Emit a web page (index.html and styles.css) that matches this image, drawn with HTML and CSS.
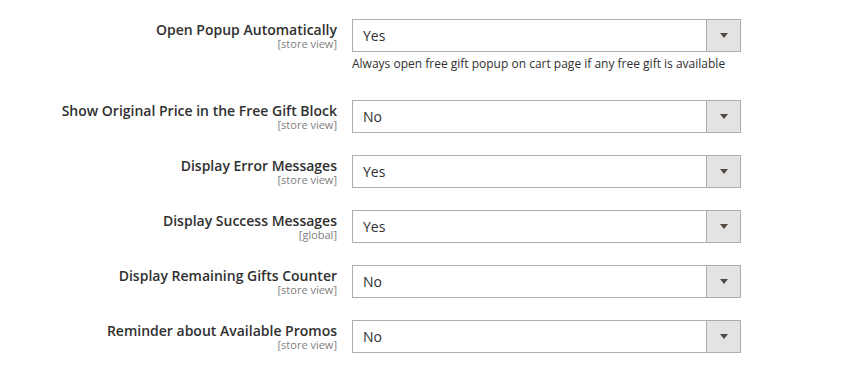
FILE: index.html
```html
<!DOCTYPE html>
<html lang="en">
<head>
<meta charset="utf-8">
<title>Free Gift Settings</title>
<link rel="stylesheet" href="styles.css">
</head>
<body>
<div class="config">
  <div class="field">
    <div class="field-label">
      <span class="label-text">Open Popup Automatically</span>
      <span class="scope">[store view]</span>
    </div>
    <div class="field-control">
      <div class="select-wrap">
        <select class="select"><option>Yes</option><option>No</option></select>
        <span class="select-arrow"><span class="triangle"></span></span>
      </div>
      <p class="note">Always open free gift popup on cart page if any free gift is available</p>
    </div>
  </div>
  <div class="field">
    <div class="field-label">
      <span class="label-text">Show Original Price in the Free Gift Block</span>
      <span class="scope">[store view]</span>
    </div>
    <div class="field-control">
      <div class="select-wrap">
        <select class="select"><option>No</option><option>Yes</option></select>
        <span class="select-arrow"><span class="triangle"></span></span>
      </div>
    </div>
  </div>
  <div class="field">
    <div class="field-label">
      <span class="label-text">Display Error Messages</span>
      <span class="scope">[store view]</span>
    </div>
    <div class="field-control">
      <div class="select-wrap">
        <select class="select"><option>Yes</option><option>No</option></select>
        <span class="select-arrow"><span class="triangle"></span></span>
      </div>
    </div>
  </div>
  <div class="field">
    <div class="field-label">
      <span class="label-text">Display Success Messages</span>
      <span class="scope">[global]</span>
    </div>
    <div class="field-control">
      <div class="select-wrap">
        <select class="select"><option>Yes</option><option>No</option></select>
        <span class="select-arrow"><span class="triangle"></span></span>
      </div>
    </div>
  </div>
  <div class="field">
    <div class="field-label">
      <span class="label-text">Display Remaining Gifts Counter</span>
      <span class="scope">[store view]</span>
    </div>
    <div class="field-control">
      <div class="select-wrap">
        <select class="select"><option>No</option><option>Yes</option></select>
        <span class="select-arrow"><span class="triangle"></span></span>
      </div>
    </div>
  </div>
  <div class="field">
    <div class="field-label">
      <span class="label-text">Reminder about Available Promos</span>
      <span class="scope">[store view]</span>
    </div>
    <div class="field-control">
      <div class="select-wrap">
        <select class="select"><option>No</option><option>Yes</option></select>
        <span class="select-arrow"><span class="triangle"></span></span>
      </div>
    </div>
  </div>
</div>
</body>
</html>
```

FILE: styles.css
```css
html, body {
  margin: 0;
  padding: 0;
  background: #ffffff;
}

body {
  font-family: "Open Sans", "Liberation Sans", sans-serif;
  color: #303030;
}

.config {
  padding-top: 19px;
  display: flex;
  flex-direction: column;
  gap: 22px;
}

.field {
  display: flex;
  align-items: flex-start;
  gap: 15px;
}

.field-label {
  width: 337px;
  flex: none;
  text-align: right;
  padding-top: 3px;
}

.label-text {
  display: block;
  font-size: 14px;
  font-weight: 600;
  line-height: 15px;
  color: #303030;
}

.scope {
  display: block;
  margin-top: 1px;
  font-size: 11px;
  line-height: 12px;
  color: #808080;
}

.field-control {
  width: 389px;
  flex: none;
}

.select-wrap {
  position: relative;
  height: 33px;
}

.select {
  -webkit-appearance: none;
  appearance: none;
  display: block;
  box-sizing: border-box;
  width: 100%;
  height: 33px;
  margin: 0;
  padding: 0 45px 0 10px;
  border: 1px solid #adadad;
  border-radius: 0;
  background: #ffffff;
  font-family: "Open Sans", "Liberation Sans", sans-serif;
  font-size: 14px;
  color: #303030;
  outline: none;
}

.select-arrow {
  position: absolute;
  top: 1px;
  right: 1px;
  bottom: 1px;
  width: 34px;
  box-sizing: border-box;
  border-left: 1px solid #adadad;
  background: #e3e3e3;
  display: flex;
  align-items: center;
  justify-content: center;
  pointer-events: none;
}

.triangle {
  width: 0;
  height: 0;
  border-left: 4px solid transparent;
  border-right: 4px solid transparent;
  border-top: 5px solid #514943;
  margin-left: 1px;
}

.note {
  margin: 3px 0 5px;
  font-size: 12px;
  line-height: 18px;
  color: #303030;
}
```
